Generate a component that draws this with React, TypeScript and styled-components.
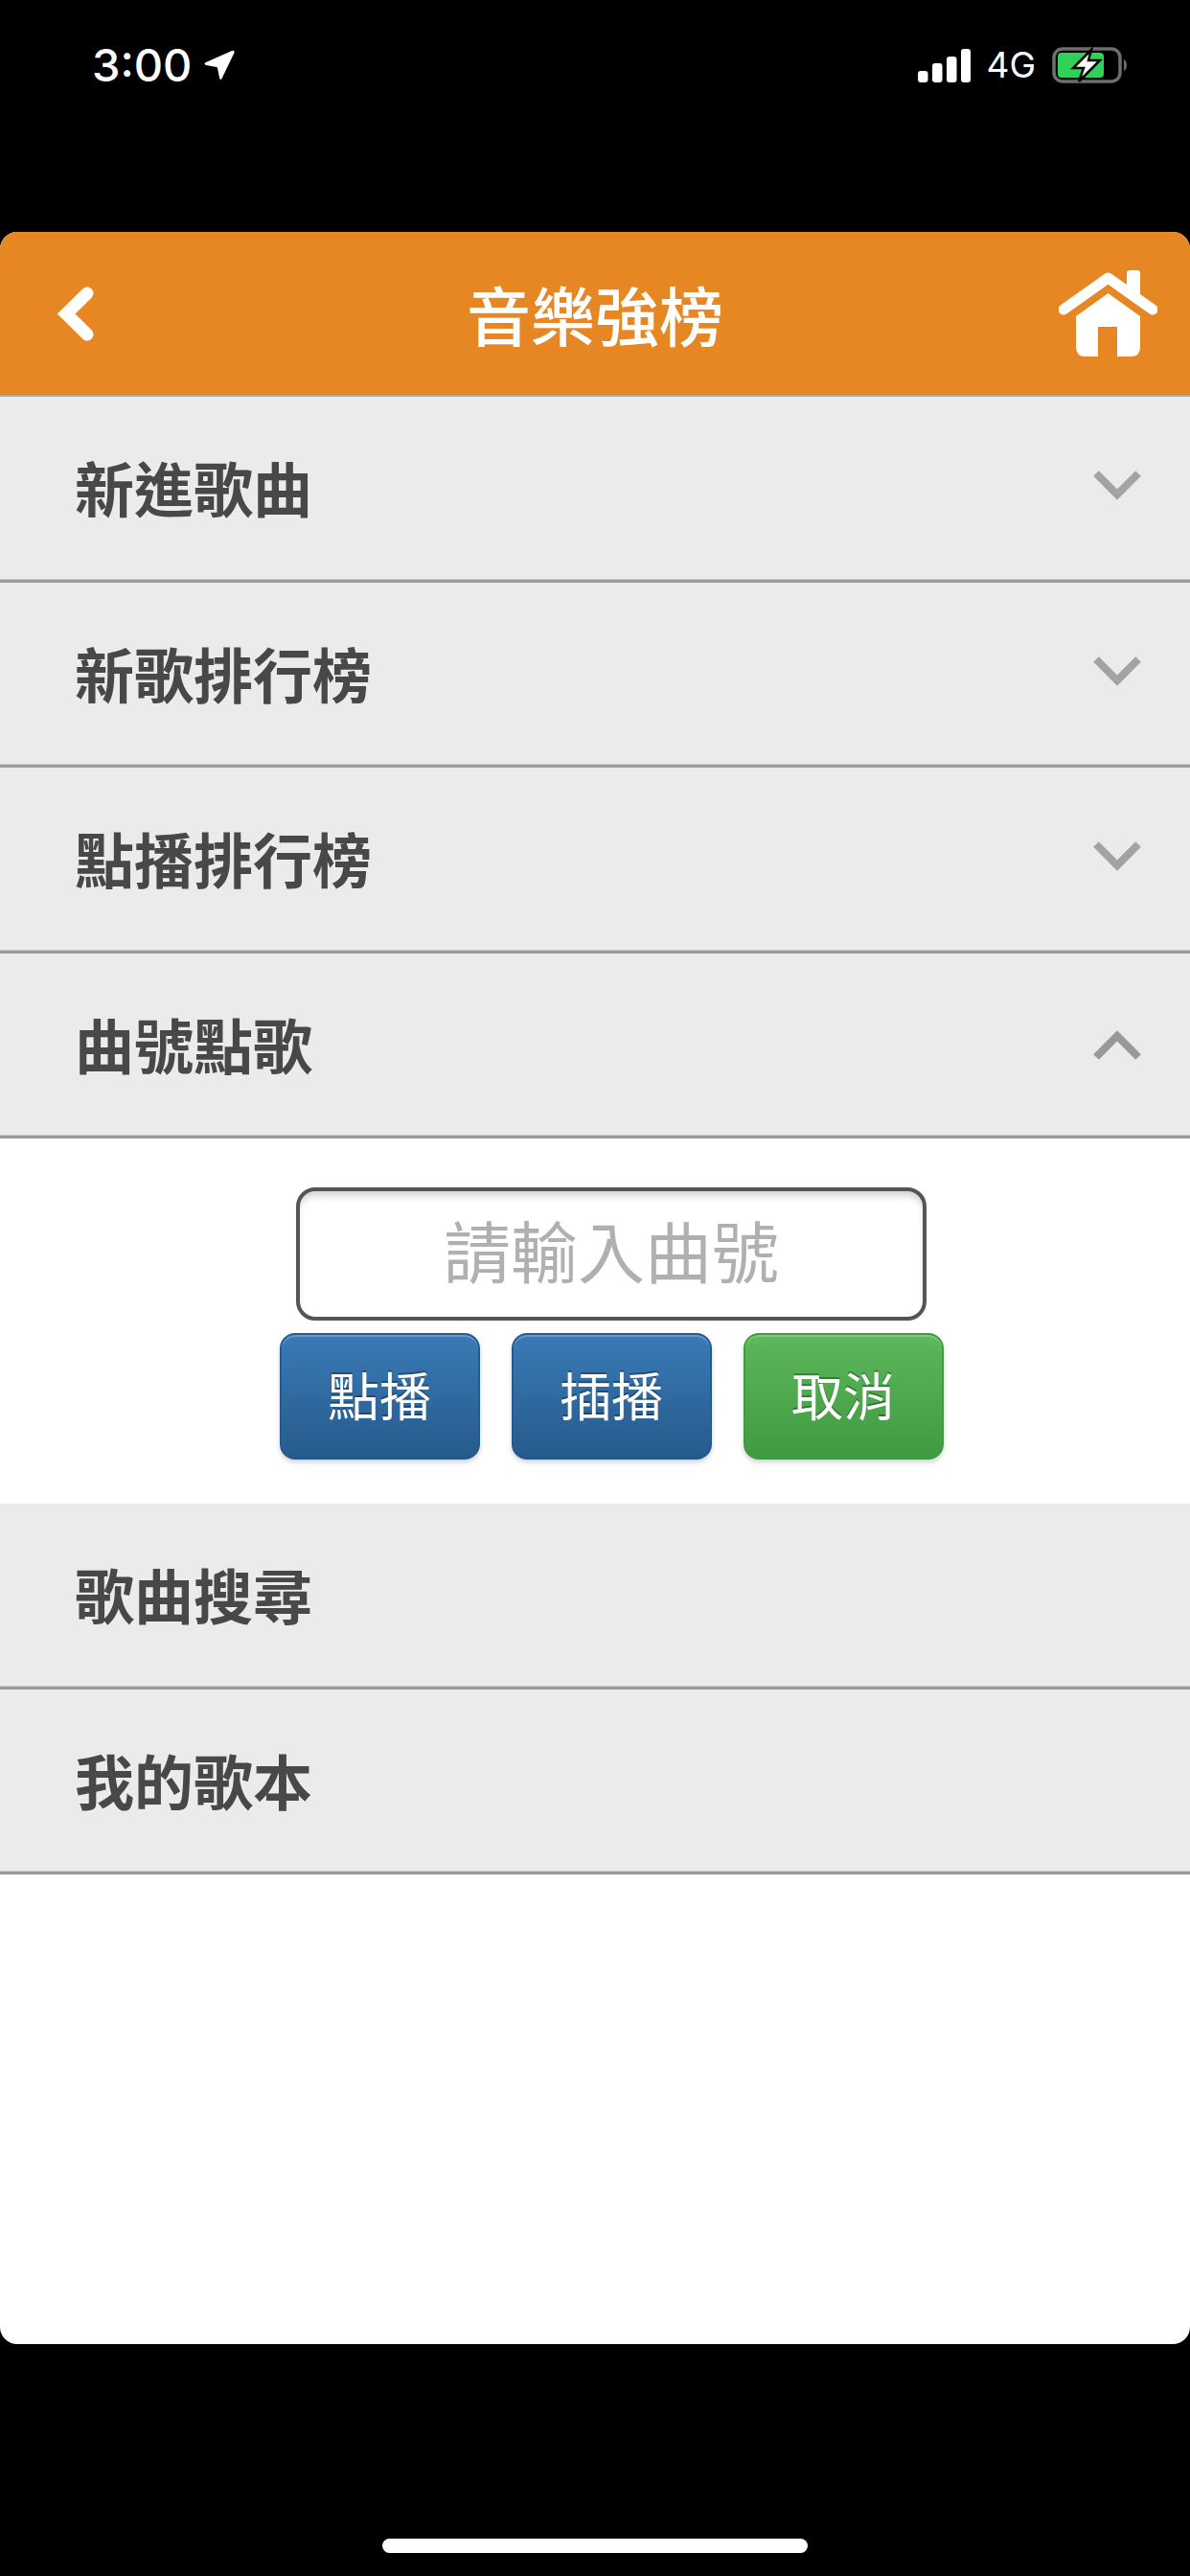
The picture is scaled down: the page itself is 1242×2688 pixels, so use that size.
import React from "react";
import styled, { createGlobalStyle } from "styled-components";

const GlobalStyle = createGlobalStyle`
  html, body {
    margin: 0;
    padding: 0;
    background: #000;
  }
  * {
    box-sizing: border-box;
  }
`;

const CJK = `"Noto Sans CJK TC", "Noto Sans CJK SC", sans-serif`;

const Screen = styled.div`
  width: 1242px;
  height: 2688px;
  background: #000;
  display: flex;
  flex-direction: column;
  overflow: hidden;
`;

// Status bar
const StatusBar = styled.div`
  height: 242px;
  flex: none;
  padding: 46px 65px 0 96px;
  display: flex;
  justify-content: space-between;
  align-items: flex-start;
  color: #fff;
  font-family: Inter, "Liberation Sans", Arial, sans-serif;
`;

const StatusGroup = styled.div`
  display: flex;
  align-items: center;
`;

const Time = styled.span`
  font-size: 47px;
  font-weight: 500;
  line-height: 44px;
  margin-right: 12px;
`;

const Network = styled.span`
  font-size: 37px;
  line-height: 44px;
  margin: 0 17px 0 16px;
`;

// Main card
const Card = styled.div`
  height: 2204px;
  flex: none;
  background: #fff;
  border-radius: 18px;
  overflow: hidden;
  font-family: ${CJK};
`;

const Header = styled.header`
  height: 172px;
  background: #e78724;
  border-bottom: 2px solid #ababab;
  display: grid;
  grid-template-columns: 1fr auto 1fr;
  align-items: center;
  padding: 0 34px;
`;

const Title = styled.h1`
  margin: 0;
  color: #fff;
  font-size: 67px;
  line-height: 1;
  font-weight: 500;
  text-align: center;
  position: relative;
  top: -1px;
`;

const HomeWrap = styled.div`
  justify-self: end;
  display: flex;
`;

const BackWrap = styled.div`
  justify-self: start;
  display: flex;
  margin-left: 26px;
`;

const Row = styled.div`
  height: 193.5px;
  background: #ebebeb;
  border-bottom: 3px solid #9c9c9c;
  box-shadow: inset 0 -1px 0 #c8c8c8;
  display: flex;
  align-items: center;
  justify-content: space-between;
  padding: 0 50px 0 78px;
`;

const RowLabel = styled.span`
  color: #484848;
  font-size: 62px;
  font-weight: 700;
  line-height: 1;
  position: relative;
  top: -1px;
`;

const Chevron = styled.svg<{ $up?: boolean }>`
  display: block;
  position: relative;
  top: ${(p) => (p.$up ? "1px" : "-3px")};
`;

// Expanded song number panel
const Panel = styled.div`
  height: 381px;
  padding: 51px 0 0 34px;
  display: flex;
  flex-direction: column;
  align-items: center;
  gap: 13px;
  background: #fff;
`;

const NumberInput = styled.input`
  width: 658px;
  height: 139px;
  border: 4px solid #555;
  border-radius: 20px;
  background: #fff;
  box-shadow: inset 0 7px 8px -3px rgba(0, 0, 0, 0.2);
  font-family: ${CJK};
  font-size: 70px;
  text-align: center;
  padding: 0 0 10px;
  outline: none;

  &::placeholder {
    color: #b0b0b0;
    opacity: 1;
  }
`;

const ButtonRow = styled.div`
  display: flex;
  gap: 33px;
`;

const ActionButton = styled.button<{ $tone: "blue" | "green" }>`
  width: 209px;
  height: 132px;
  border-radius: 16px;
  border: 2px solid ${(p) => (p.$tone === "blue" ? "#23598c" : "#3f9a42")};
  background: ${(p) =>
    p.$tone === "blue"
      ? "linear-gradient(#3a7ab6, #265a8c)"
      : "linear-gradient(#5cb85c, #409a40)"};
  box-shadow: inset 0 2px 1px rgba(255, 255, 255, 0.25),
    0 3px 5px rgba(0, 0, 0, 0.18);
  color: #fff;
  font-family: ${CJK};
  font-size: 54px;
  line-height: 1;
  padding: 0 0 4px;
  text-shadow: 0 -2px 0 rgba(0, 0, 0, 0.3);
`;

const HomeIndicatorArea = styled.div`
  flex: 1;
  display: flex;
  justify-content: center;
  padding-top: 203px;
`;

const HomeIndicator = styled.div`
  width: 444px;
  height: 15px;
  border-radius: 8px;
  background: #fff;
`;

const LocationArrow = () => (
  <svg width="34" height="32" viewBox="0 0 34 32">
    <path
      d="M30 1 Q33 0 32.5 3 L20 29 Q18 33 17 29 L15 19 Q15 18 14 18 L3 16 Q0 14.5 3 13 Z"
      fill="#fff"
    />
  </svg>
);

const SignalBars = () => (
  <svg width="55" height="35" viewBox="0 0 55 35">
    <rect x="0" y="23" width="10.5" height="12" rx="3" fill="#fff" />
    <rect x="15" y="15" width="10.5" height="20" rx="3" fill="#fff" />
    <rect x="30" y="8" width="10.5" height="27" rx="3" fill="#fff" />
    <rect x="45" y="0" width="10" height="35" rx="3" fill="#fff" />
  </svg>
);

const Battery = () => (
  <svg width="79" height="38" viewBox="0 0 79 38">
    <rect x="2" y="2" width="69" height="34" rx="9" fill="none" stroke="#6e6e6e" strokeWidth="3.5" />
    <path d="M75 13 C79 15 79 23 75 25 Z" fill="#6e6e6e" />
    <rect x="6" y="6" width="48" height="26" rx="4" fill="#30d158" />
    <path
      d="M41 3 L22 22 L33 22 L28 36 L50 14 L38 14 Z"
      fill="#fff"
      stroke="#000"
      strokeWidth="2.5"
    />
  </svg>
);

const BackIcon = () => (
  <svg width="38" height="57" viewBox="0 0 38 57">
    <path
      d="M31 7 L9 28.5 L31 50"
      fill="none"
      stroke="#fff"
      strokeWidth="13"
      strokeLinecap="round"
      strokeLinejoin="miter"
    />
  </svg>
);

const HomeIcon = () => (
  <svg width="103" height="90" viewBox="0 0 103 90">
    <path d="M71 3 Q71 0 74 0 L82 0 Q85 0 85 3 L85 26 L71 16 Z" fill="#fff" />
    <path
      d="M5 41 L51.5 8 L98 41"
      fill="none"
      stroke="#fff"
      strokeWidth="11"
      strokeLinecap="round"
      strokeLinejoin="round"
    />
    <path
      d="M51.5 24 L85 48 L85 80 Q85 90 75 90 L61 90 L61 59 L41 59 L41 90 L28 90 Q18 90 18 80 L18 48 Z"
      fill="#fff"
    />
  </svg>
);

const ChevronIcon = ({ up }: { up?: boolean }) => (
  <Chevron $up={up} width="52" height="34" viewBox="0 0 52 34">
    <path
      d={up ? "M4 29 L26 7 L48 29" : "M4 5 L26 27 L48 5"}
      fill="none"
      stroke={up ? "#999" : "#a3a3a3"}
      strokeWidth="8"
    />
  </Chevron>
);

const App = () => {
  return (
    <Screen>
      <GlobalStyle />
      <StatusBar>
        <StatusGroup>
          <Time>3:00</Time>
          <LocationArrow />
        </StatusGroup>
        <StatusGroup>
          <SignalBars />
          <Network>4G</Network>
          <Battery />
        </StatusGroup>
      </StatusBar>

      <Card>
        <Header>
          <BackWrap>
            <BackIcon />
          </BackWrap>
          <Title>音樂強榜</Title>
          <HomeWrap>
            <HomeIcon />
          </HomeWrap>
        </Header>

        {["新進歌曲", "新歌排行榜", "點播排行榜"].map((label) => (
          <Row key={label}>
            <RowLabel>{label}</RowLabel>
            <ChevronIcon />
          </Row>
        ))}
        <Row>
          <RowLabel>曲號點歌</RowLabel>
          <ChevronIcon up />
        </Row>

        <Panel>
          <NumberInput placeholder="請輸入曲號" />
          <ButtonRow>
            <ActionButton $tone="blue">點播</ActionButton>
            <ActionButton $tone="blue">插播</ActionButton>
            <ActionButton $tone="green">取消</ActionButton>
          </ButtonRow>
        </Panel>

        <Row>
          <RowLabel>歌曲搜尋</RowLabel>
        </Row>
        <Row>
          <RowLabel>我的歌本</RowLabel>
        </Row>
      </Card>

      <HomeIndicatorArea>
        <HomeIndicator />
      </HomeIndicatorArea>
    </Screen>
  );
};

export default App;
